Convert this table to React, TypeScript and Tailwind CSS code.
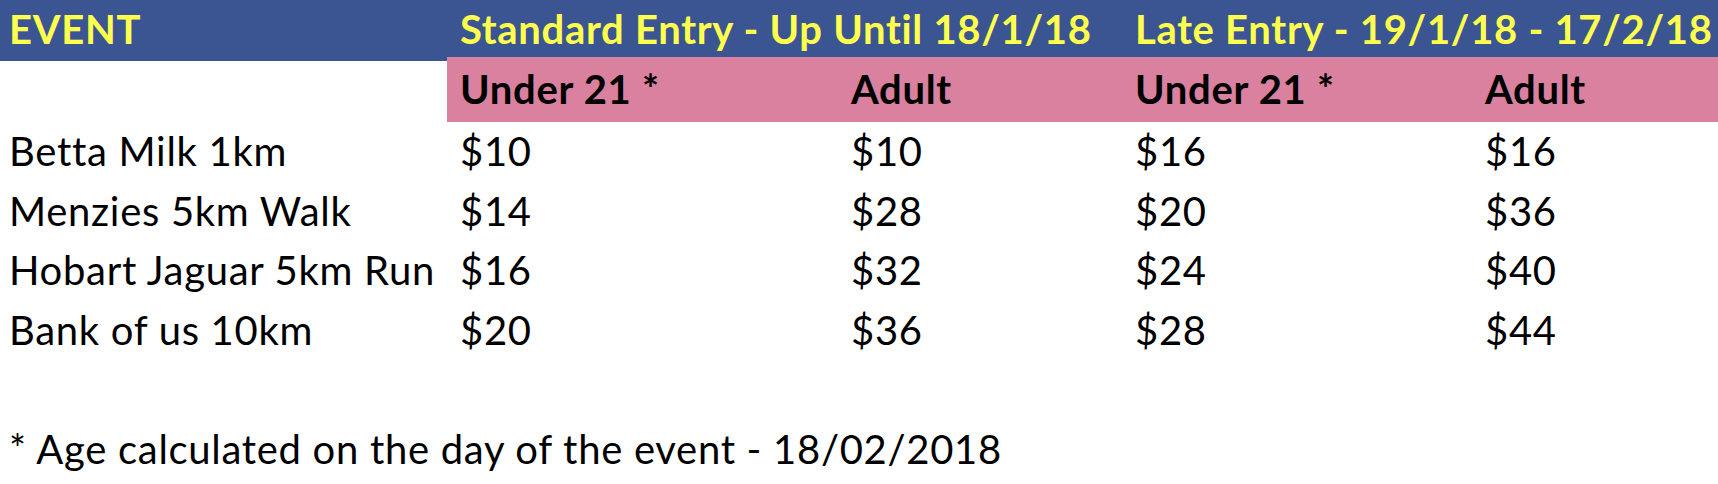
const rows = [
  { event: "Betta Milk 1km", prices: ["$10", "$10", "$16", "$16"] },
  { event: "Menzies 5km Walk", prices: ["$14", "$28", "$20", "$36"] },
  { event: "Hobart Jaguar 5km Run", prices: ["$16", "$32", "$24", "$40"] },
  { event: "Bank of us 10km", prices: ["$20", "$36", "$28", "$44"] },
];

const cols = "grid grid-cols-[447px_391px_284px_350px_1fr]";

export default function App() {
  return (
    <div className="w-[1718px] h-[484px] bg-white text-black text-[40px] tracking-[0.7px] font-['Lato','Liberation_Sans',sans-serif] overflow-hidden">
      {/* blue title band */}
      <div className={`${cols} h-[57px] bg-[#3a5591] font-bold text-[#ffff4d] leading-[47px] pt-[6px]`}>
        <div className="pl-[9px]">EVENT</div>
        <div className="col-span-2 pl-[13px] whitespace-nowrap">Standard Entry - Up Until 18/1/18</div>
        <div className="col-span-2 pl-[13px] whitespace-nowrap">Late Entry - 19/1/18 - 17/2/18</div>
      </div>

      {/* pink sub header */}
      <div className={`${cols} h-[65px] font-bold`}>
        <div>
          <div className="h-[4px] bg-[#3a5591]" />
        </div>
        <div className="col-span-4 grid grid-cols-[391px_284px_350px_1fr] bg-[#d9819f] leading-[47px] pt-[9px]">
          <div className="pl-[13px]">Under 21 *</div>
          <div className="pl-[13px]">Adult</div>
          <div className="pl-[13px]">Under 21 *</div>
          <div className="pl-[13px]">Adult</div>
        </div>
      </div>

      {rows.map((r) => (
        <div key={r.event} className={`${cols} h-[59.5px] leading-[59.5px]`}>
          <div className="pl-[9px] whitespace-nowrap">{r.event}</div>
          {r.prices.map((p, i) => (
            <div key={i} className="pl-[13px]">
              {p}
            </div>
          ))}
        </div>
      ))}

      <div className="h-[59.5px]" />
      <div className="h-[59.5px] leading-[59.5px] pl-[9px] whitespace-nowrap">
        * Age calculated on the day of the event - 18/02/2018
      </div>
    </div>
  );
}
